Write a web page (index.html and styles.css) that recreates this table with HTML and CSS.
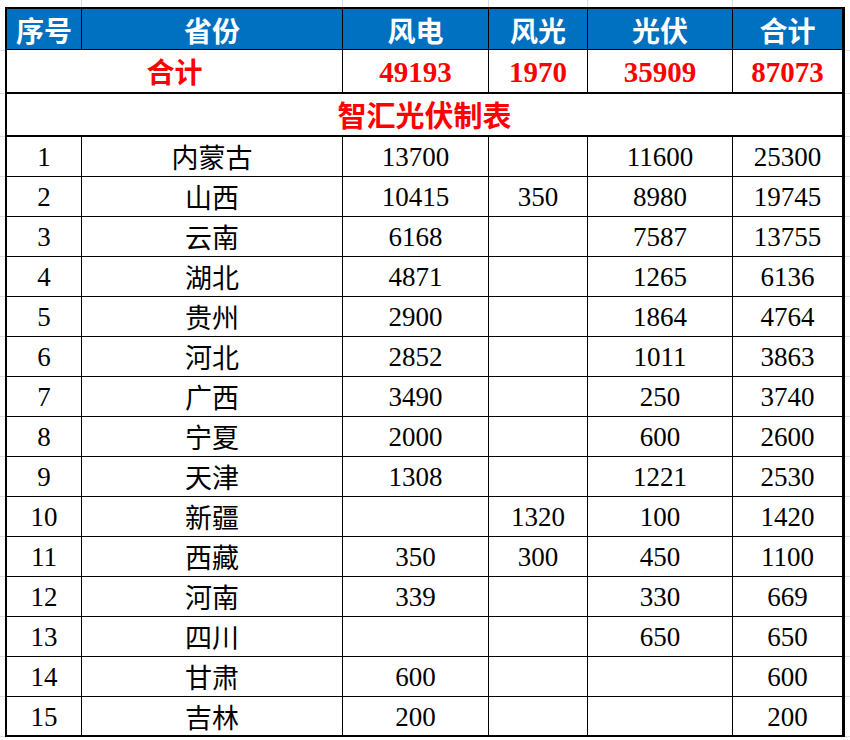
FILE: index.html
```html
<!DOCTYPE html>
<html lang="zh">
<head>
<meta charset="utf-8">
<title>智汇光伏制表</title>
<link rel="stylesheet" href="styles.css">
</head>
<body>
<div class="sheet">
  <div class="cell head">序号</div>
  <div class="cell head">省份</div>
  <div class="cell head">风电</div>
  <div class="cell head">风光</div>
  <div class="cell head">光伏</div>
  <div class="cell head last">合计</div>

  <div class="cell total-label span2 sum-row">合计</div>
  <div class="cell total-num sum-row">49193</div>
  <div class="cell total-num sum-row">1970</div>
  <div class="cell total-num sum-row">35909</div>
  <div class="cell total-num sum-row last">87073</div>

  <div class="cell title span6 title-row last">智汇光伏制表</div>

  <div class="cell num">1</div><div class="cell prov">内蒙古</div><div class="cell num">13700</div><div class="cell num"></div><div class="cell num">11600</div><div class="cell num last">25300</div>
  <div class="cell num">2</div><div class="cell prov">山西</div><div class="cell num">10415</div><div class="cell num">350</div><div class="cell num">8980</div><div class="cell num last">19745</div>
  <div class="cell num">3</div><div class="cell prov">云南</div><div class="cell num">6168</div><div class="cell num"></div><div class="cell num">7587</div><div class="cell num last">13755</div>
  <div class="cell num">4</div><div class="cell prov">湖北</div><div class="cell num">4871</div><div class="cell num"></div><div class="cell num">1265</div><div class="cell num last">6136</div>
  <div class="cell num">5</div><div class="cell prov">贵州</div><div class="cell num">2900</div><div class="cell num"></div><div class="cell num">1864</div><div class="cell num last">4764</div>
  <div class="cell num">6</div><div class="cell prov">河北</div><div class="cell num">2852</div><div class="cell num"></div><div class="cell num">1011</div><div class="cell num last">3863</div>
  <div class="cell num">7</div><div class="cell prov">广西</div><div class="cell num">3490</div><div class="cell num"></div><div class="cell num">250</div><div class="cell num last">3740</div>
  <div class="cell num">8</div><div class="cell prov">宁夏</div><div class="cell num">2000</div><div class="cell num"></div><div class="cell num">600</div><div class="cell num last">2600</div>
  <div class="cell num">9</div><div class="cell prov">天津</div><div class="cell num">1308</div><div class="cell num"></div><div class="cell num">1221</div><div class="cell num last">2530</div>
  <div class="cell num">10</div><div class="cell prov">新疆</div><div class="cell num"></div><div class="cell num">1320</div><div class="cell num">100</div><div class="cell num last">1420</div>
  <div class="cell num">11</div><div class="cell prov">西藏</div><div class="cell num">350</div><div class="cell num">300</div><div class="cell num">450</div><div class="cell num last">1100</div>
  <div class="cell num">12</div><div class="cell prov">河南</div><div class="cell num">339</div><div class="cell num"></div><div class="cell num">330</div><div class="cell num last">669</div>
  <div class="cell num">13</div><div class="cell prov">四川</div><div class="cell num"></div><div class="cell num"></div><div class="cell num">650</div><div class="cell num last">650</div>
  <div class="cell num">14</div><div class="cell prov">甘肃</div><div class="cell num">600</div><div class="cell num"></div><div class="cell num"></div><div class="cell num last">600</div>
  <div class="cell num bottom2">15</div><div class="cell prov bottom2">吉林</div><div class="cell num bottom2">200</div><div class="cell num bottom2"></div><div class="cell num bottom2"></div><div class="cell num last bottom2">200</div>
</div>
</body>
</html>
```

FILE: styles.css
```css
html {
  background:
    linear-gradient(#dcdcdc, #dcdcdc) 0 50px / 100% 1px no-repeat,
    linear-gradient(#dcdcdc, #dcdcdc) 0 93px / 100% 1px no-repeat,
    repeating-linear-gradient(to bottom, #dcdcdc 0 1px, transparent 1px 40px) 0 136px / 100% 610px no-repeat,
    linear-gradient(#dcdcdc, #dcdcdc) 81px 0 / 1px 100% no-repeat,
    linear-gradient(#dcdcdc, #dcdcdc) 342px 0 / 1px 100% no-repeat,
    linear-gradient(#dcdcdc, #dcdcdc) 488px 0 / 1px 100% no-repeat,
    linear-gradient(#dcdcdc, #dcdcdc) 587px 0 / 1px 100% no-repeat,
    linear-gradient(#dcdcdc, #dcdcdc) 732px 0 / 1px 100% no-repeat,
    #ffffff;
}

body {
  margin: 0;
  padding: 7px 0 0 5px;
}

.sheet {
  display: grid;
  grid-template-columns: 75px 261px 146px 99px 145px 112px;
  grid-template-rows: 41px 44px 43px repeat(15, 40px);
  width: max-content;
  border-left: 2px solid #000;
  border-top: 2px solid #000;
  background: #fff;
}

.cell {
  box-sizing: border-box;
  border-right: 1px solid #000;
  border-bottom: 1px solid #000;
  display: flex;
  align-items: center;
  justify-content: center;
  white-space: nowrap;
  overflow: hidden;
}

.last {
  border-right: 3px solid #000;
}

.head {
  background: #0070c0;
  color: #fff;
  font-family: "Noto Sans CJK SC", sans-serif;
  font-weight: 700;
  font-size: 28px;
  line-height: 1;
  padding-top: 1px;
}

.sum-row {
  border-bottom: 2px solid #000;
  color: #ff0000;
}

.total-label {
  font-family: "Noto Sans CJK SC", sans-serif;
  font-weight: 700;
  font-size: 28px;
  line-height: 1;
}

.total-num {
  font-family: "Liberation Serif", "Times New Roman", serif;
  font-weight: 700;
  font-size: 29px;
  line-height: 1;
  padding-top: 2px;
}

.span2 {
  grid-column: span 2;
}

.span6 {
  grid-column: span 6;
}

.title-row {
  border-bottom: 2px solid #000;
}

.title {
  color: #ff0000;
  font-family: "Noto Sans CJK SC", sans-serif;
  font-weight: 700;
  font-size: 29px;
  line-height: 1;
}

.num {
  font-family: "Liberation Serif", "Times New Roman", serif;
  font-size: 27px;
  line-height: 1;
  color: #000;
  padding-top: 2px;
}

.prov {
  font-family: "Noto Sans CJK SC", sans-serif;
  font-size: 27px;
  line-height: 1;
  color: #000;
}

.bottom2 {
  border-bottom: 2px solid #000;
}
```
